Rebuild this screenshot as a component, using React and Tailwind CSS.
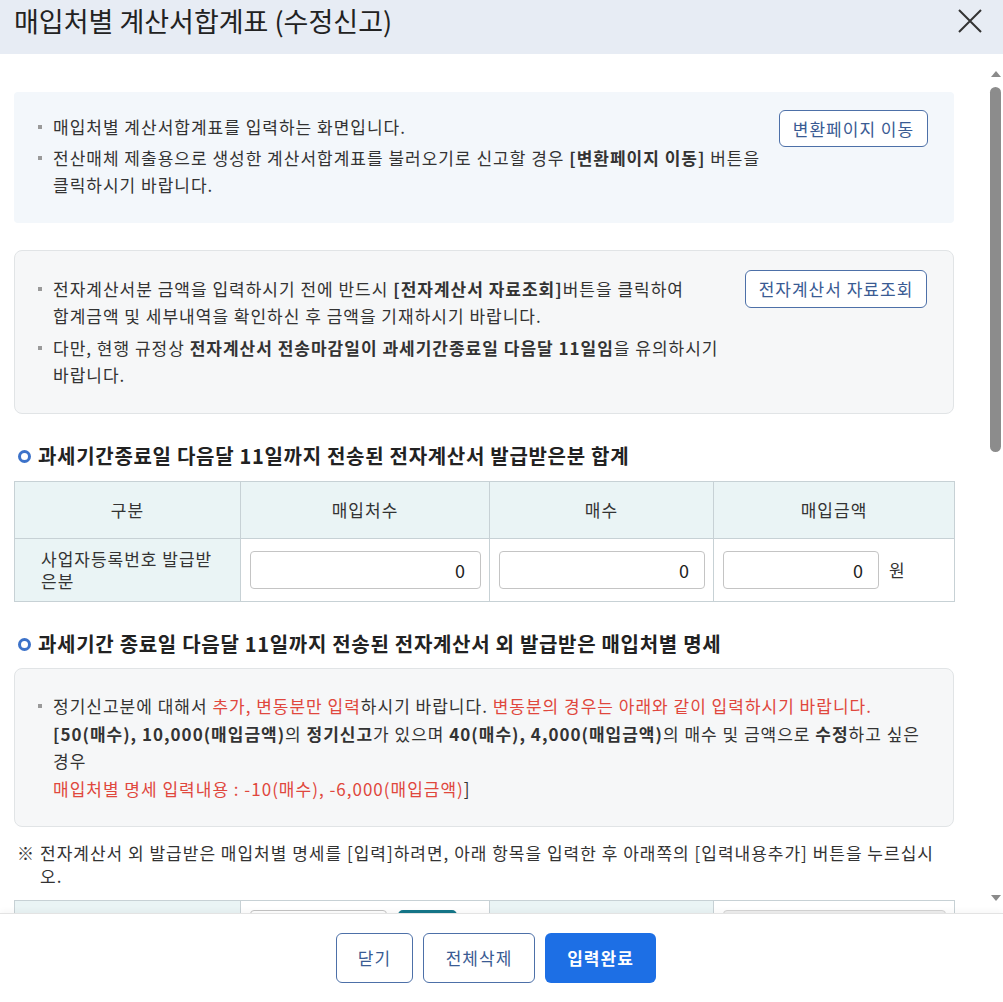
import React from "react";

const FONT = "font-['Noto_Sans_CJK_KR','Noto_Sans',sans-serif]";

const Bullet = ({ children }) => (
  <li className="flex">
    <span className="w-[15px] shrink-0 pt-[12px]">
      <span className="block w-[4px] h-[4px] bg-[#9a9a9a]" />
    </span>
    <span className="flex-1">{children}</span>
  </li>
);

const OutlineButton = ({ children, className = "" }) => (
  <button
    type="button"
    className={`shrink-0 border border-[#4d70a8] rounded-[6px] bg-white text-[#3a5b93] text-[17px] tracking-[1px] ${className}`}
  >
    {children}
  </button>
);

const SectionTitle = ({ children }) => (
  <h3 className="flex items-center h-[28px] text-[20px] tracking-[0.7px] font-bold text-[#222]">
    <span className="w-[13px] h-[13px] rounded-full border-[3px] border-[#3c72c9] ml-[4px] mr-[7px] shrink-0" />
    {children}
  </h3>
);

const NumInput = ({ className = "w-full", value = "0" }) => (
  <input
    readOnly
    value={value}
    className={`h-[38px] border border-[#c4c4c4] rounded-[4px] bg-white px-[14px] text-right text-[18px] text-[#222] outline-none ${className}`}
  />
);

const th = "border border-[#c7d1d5] bg-[#eaf4f5] text-[17px] font-normal text-[#333]";
const td = "border border-[#c7d1d5] px-[9px] pr-[8px]";

export default function App() {
  return (
    <div className={`${FONT} h-[1002px] w-full flex flex-col bg-white text-[#333] overflow-hidden`}>
      {/* Header */}
      <div className="h-[54px] shrink-0 bg-[#e7ecf4] flex items-center justify-between pl-[14px] pr-[21px] pb-[12px]">
        <h2 className="text-[27px] text-[#222]">매입처별 계산서합계표 (수정신고)</h2>
        <button type="button" className="w-[24px] h-[24px] flex items-center justify-center">
          <svg width="24" height="24" viewBox="0 0 24 24" fill="none" stroke="#333" strokeWidth="2">
            <path d="M1 1 L23 23 M23 1 L1 23" />
          </svg>
        </button>
      </div>

      {/* Body */}
      <div className="flex-1 min-h-0 flex">
        <div className="flex-1 overflow-hidden">
          <div className="pl-[14px] pr-[34px] pt-[38px] pb-[60px] text-[17px] tracking-[1px]">
            {/* Box 1 */}
            <div className="bg-[#f3f7fb] rounded-[4px] flex pl-[24px] pr-[26px] pt-[18px] pb-[25px]">
              <ul className="flex-1 pt-[3px] leading-[27px] flex flex-col gap-[4px] break-keep">
                <Bullet>매입처별 계산서합계표를 입력하는 화면입니다.</Bullet>
                <Bullet>
                  전산매체 제출용으로 생성한 계산서합계표를 불러오기로 신고할 경우 <b>[변환페이지 이동]</b> 버튼을
                  클릭하시기 바랍니다.
                </Bullet>
              </ul>
              <OutlineButton className="ml-[12px] w-[149px] h-[37px]">변환페이지 이동</OutlineButton>
            </div>

            {/* Box 2 */}
            <div className="mt-[27px] bg-[#f6f7f8] border border-[#e1e4e6] rounded-[8px] flex pl-[23px] pr-[26px] pt-[19px] pb-[25px]">
              <ul className="flex-1 pt-[5px] leading-[27px] flex flex-col gap-[5px] break-keep">
                <Bullet>
                  전자계산서분 금액을 입력하시기 전에 반드시 <b>[전자계산서 자료조회]</b>버튼을 클릭하여 합계금액 및
                  세부내역을 확인하신 후 금액을 기재하시기 바랍니다.
                </Bullet>
                <Bullet>
                  다만, 현행 규정상 <b>전자계산서 전송마감일이 과세기간종료일 다음달 11일임</b>을 유의하시기 바랍니다.
                </Bullet>
              </ul>
              <OutlineButton className="ml-[12px] w-[182px] h-[38px]">전자계산서 자료조회</OutlineButton>
            </div>

            {/* Section 1 */}
            <div className="mt-[28px]">
              <SectionTitle>과세기간종료일 다음달 11일까지 전송된 전자계산서 발급받은분 합계</SectionTitle>
            </div>
            <table className="mt-[11px] w-[940px] table-fixed border-collapse">
              <colgroup>
                <col className="w-[226px]" />
                <col className="w-[249px]" />
                <col className="w-[224px]" />
                <col className="w-[241px]" />
              </colgroup>
              <thead>
                <tr className="h-[57px]">
                  <th className={th}>구분</th>
                  <th className={th}>매입처수</th>
                  <th className={th}>매수</th>
                  <th className={th}>매입금액</th>
                </tr>
              </thead>
              <tbody>
                <tr className="h-[63px]">
                  <td className="border border-[#c7d1d5] bg-[#eaf4f5] pl-[26px] pr-[14px] leading-[22px] text-[#333]">
                    사업자등록번호 발급받은분
                  </td>
                  <td className={td}>
                    <NumInput />
                  </td>
                  <td className={td}>
                    <NumInput />
                  </td>
                  <td className={td}>
                    <div className="flex items-center gap-[10px]">
                      <NumInput className="w-[156px]" />
                      <span>원</span>
                    </div>
                  </td>
                </tr>
              </tbody>
            </table>

            {/* Section 2 */}
            <div className="mt-[28px]">
              <SectionTitle>과세기간 종료일 다음달 11일까지 전송된 전자계산서 외 발급받은 매입처별 명세</SectionTitle>
            </div>
            <div className="mt-[10px] bg-[#f6f7f8] border border-[#e1e4e6] rounded-[8px] pl-[23px] pr-[26px] pt-[23px] pb-[24px]">
              <ul className="leading-[27.5px] break-keep">
                <Bullet>
                  정기신고분에 대해서 <span className="text-[#e0473d]">추가, 변동분만 입력</span>하시기 바랍니다.{" "}
                  <span className="text-[#e0473d]">변동분의 경우는 아래와 같이 입력하시기 바랍니다.</span>
                  <br />
                  <b>[50(매수), 10,000(매입금액)</b>의 <b>정기신고</b>가 있으며 <b>40(매수), 4,000(매입금액)</b>의 매수 및
                  금액으로 <b>수정</b>하고 싶은 경우
                  <br />
                  <span className="text-[#e0473d]">매입처별 명세 입력내용 : -10(매수), -6,000(매입금액)</span>]
                </Bullet>
              </ul>
            </div>

            <p className="mt-[14px] flex leading-[23px] pl-[3px] pr-[10px] text-[#333]">
              <span className="w-[23px] shrink-0">※</span>
              <span>
                전자계산서 외 발급받은 매입처별 명세를 [입력]하려면, 아래 항목을 입력한 후 아래쪽의 [입력내용추가] 버튼을
                누르십시오.
              </span>
            </p>

            <table className="mt-[13px] w-[940px] table-fixed border-collapse">
              <colgroup>
                <col className="w-[226px]" />
                <col className="w-[249px]" />
                <col className="w-[224px]" />
                <col className="w-[241px]" />
              </colgroup>
              <tbody>
                <tr className="h-[56px]">
                  <th className={th}>사업자등록번호</th>
                  <td className={td}>
                    <div className="flex items-center gap-[11px]">
                      <input className="w-[137px] h-[38px] border border-[#c4c4c4] rounded-[4px] px-[10px] outline-none" />
                      <button type="button" className="w-[59px] h-[38px] rounded-[5px] bg-[#15778a] text-white text-[16px]">
                        확인
                      </button>
                    </div>
                  </td>
                  <th className={th}>상호(법인명)</th>
                  <td className={td}>
                    <input disabled className="w-full h-[38px] border border-[#d4d4d4] rounded-[4px] bg-[#efefef]" />
                  </td>
                </tr>
                <tr className="h-[56px]">
                  <th className={th}>매수</th>
                  <td className={td}>
                    <NumInput />
                  </td>
                  <th className={th}>매입금액</th>
                  <td className={td}>
                    <div className="flex items-center gap-[10px]">
                      <NumInput className="w-[156px]" />
                      <span>원</span>
                    </div>
                  </td>
                </tr>
              </tbody>
            </table>

            <div className="mt-[16px] flex justify-end gap-[8px]">
              <OutlineButton className="w-[140px] h-[38px]">입력내용추가</OutlineButton>
              <OutlineButton className="w-[140px] h-[38px]">선택내용삭제</OutlineButton>
            </div>
          </div>
        </div>

        {/* Scrollbar */}
        <div className="w-[15px] shrink-0 bg-white flex flex-col items-center pt-[17px] pb-[12px]">
          <span className="w-0 h-0 border-l-[5px] border-r-[5px] border-b-[6px] border-l-transparent border-r-transparent border-b-[#8a8a8a]" />
          <span className="mt-[10px] w-[11px] h-[365px] rounded-[6px] bg-[#8c8c8c]" />
          <span className="flex-1" />
          <span className="w-0 h-0 border-l-[5px] border-r-[5px] border-t-[6px] border-l-transparent border-r-transparent border-t-[#8a8a8a]" />
        </div>
      </div>

      {/* Footer */}
      <div className="h-[89px] shrink-0 bg-white border-t border-[#e3e3e3] shadow-[0_-2px_6px_rgba(0,0,0,0.04)] flex items-center justify-center gap-[10px] pr-[11px]">
        <OutlineButton className="w-[77px] h-[50px]">닫기</OutlineButton>
        <OutlineButton className="w-[112px] h-[50px]">전체삭제</OutlineButton>
        <button type="button" className="w-[111px] h-[50px] rounded-[6px] bg-[#1d6fe5] text-white text-[17px] tracking-[1px] font-bold">
          입력완료
        </button>
      </div>
    </div>
  );
}
